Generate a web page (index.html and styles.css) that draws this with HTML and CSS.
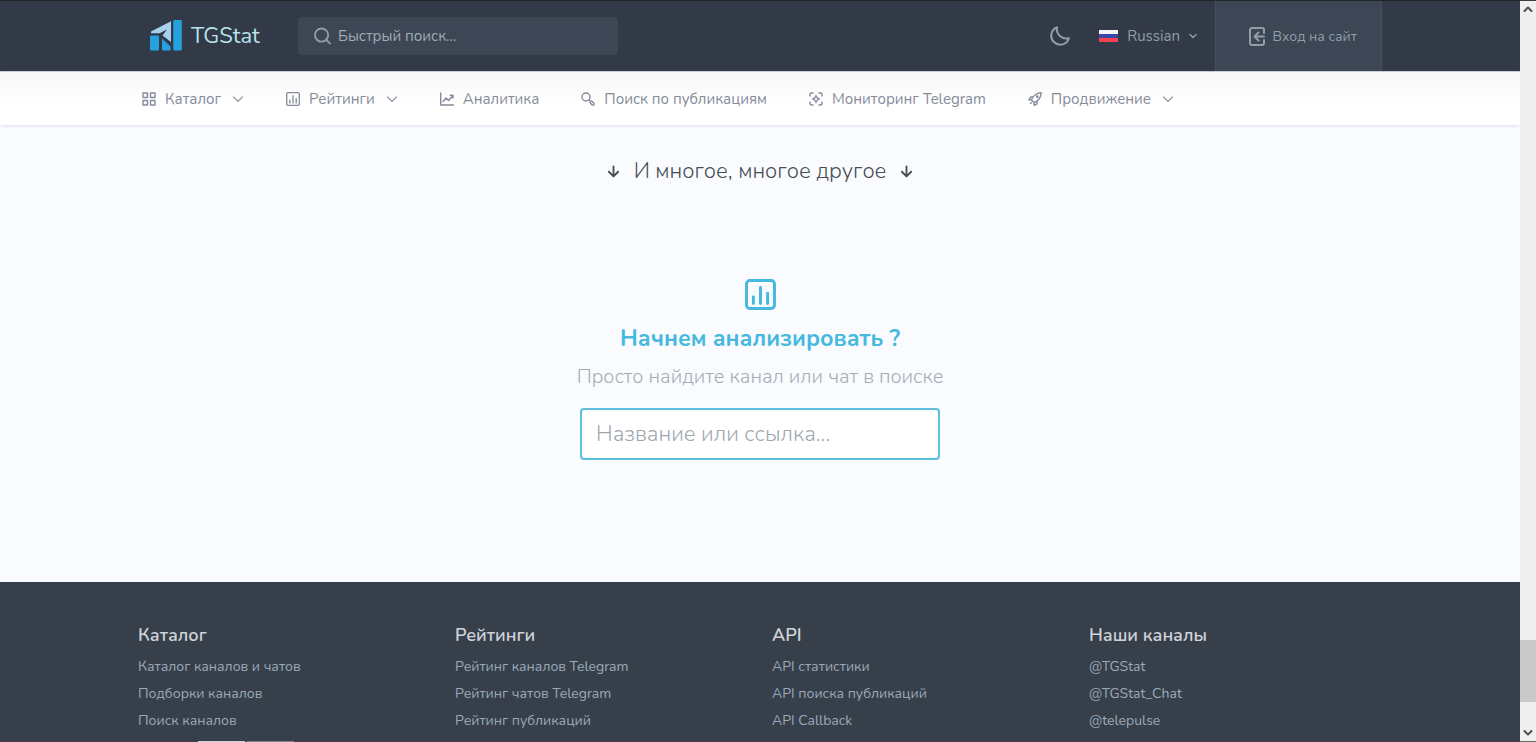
FILE: index.html
```html
<!DOCTYPE html>
<html lang="ru">
<head>
<meta charset="utf-8">
<meta name="viewport" content="width=device-width, initial-scale=1">
<title>TGStat</title>
<link rel="stylesheet" href="styles.css">
</head>
<body>
<svg class="sprite" aria-hidden="true">
  <symbol id="chart-box" viewBox="0 0 24 24"><rect x="1.2" y="1.2" width="21.6" height="21.6" rx="2.4"/><path d="M6.5 14v5M12 6.500v12.500M17.500 11v8"/></symbol>
  <symbol id="chevron" viewBox="0 0 12 12"><path d="M1.500 3.800 6 8.300l4.500-4.500"/></symbol>
  <symbol id="arrow-down" viewBox="0 0 12 14"><path d="M6 1.500v10.500M1 7.300l5 5 5-5"/></symbol>
</svg>
<div class="page">
  <header class="topbar">
    <div class="container topbar-row">
      <a class="brand" href="#">
        <svg class="brand-mark" viewBox="0 0 32 32" aria-hidden="true">
          <rect x="23.300" y="0" width="8.500" height="30.500" rx="1" fill="#27a0e0"/>
          <path d="M1 15.500h7a1 1 0 0 1 1 1v13a1 1 0 0 1-1 1H1a1 1 0 0 1-1-1v-13a1 1 0 0 1 1-1z" fill="#27a0e0"/>
          <path d="M12 18.500 20.500 26.500V29.500a1 1 0 0 1-1 1H13a1 1 0 0 1-1-1z" fill="#27a0e0"/>
          <path d="M1 11.500 21 1.200V22L12.500 15.500 17 9.500 9.500 13.300H1z" fill="#a6cff0"/>
        </svg>
        <span>TGStat</span>
      </a>
      <form class="quick-search" role="search">
        <svg viewBox="0 0 18 18" aria-hidden="true"><circle cx="8" cy="8" r="7"/><path d="m13 13 4 4"/></svg>
        <input type="search" aria-label="Быстрый поиск" placeholder="Быстрый поиск...">
      </form>
      <div class="tools">
        <button class="theme" type="button" aria-label="Тёмная тема">
          <svg viewBox="0 0 20 20" aria-hidden="true"><path d="M7 1.300A9 9 0 1 0 18.900 12.200 9.500 9.500 0 0 1 7 1.300z"/></svg>
        </button>
        <button class="language" type="button">
          <span class="flag"></span><span>Russian</span>
          <svg class="small-chevron" aria-hidden="true"><use href="#chevron"/></svg>
        </button>
        <a class="login" href="#">
          <svg viewBox="0 0 16 19" aria-hidden="true"><path d="M15 6V3a2 2 0 0 0-2-2H3a2 2 0 0 0-2 2v13a2 2 0 0 0 2 2h10a2 2 0 0 0 2-2v-3M15 9.500H6M9.500 5.500l-4 4 4 4"/></svg>
          <span>Вход на сайт</span>
        </a>
      </div>
    </div>
  </header>
  <nav class="menu">
    <div class="container menu-row">
      <a href="#"><svg class="icon" viewBox="0 0 14 14" aria-hidden="true"><path d="M1 1h4.500v4.500H1zM8.500 1H13v4.500H8.500zM1 8.500h4.500V13H1zM8.500 8.500H13V13H8.500z"/></svg><span>Каталог</span><svg class="chevron" aria-hidden="true"><use href="#chevron"/></svg></a>
      <a href="#"><svg class="icon chart" aria-hidden="true"><use href="#chart-box"/></svg><span>Рейтинги</span><svg class="chevron" aria-hidden="true"><use href="#chevron"/></svg></a>
      <a href="#"><svg class="icon" viewBox="0 0 14 14" aria-hidden="true"><path d="M.7 1v12H14M3 9.500l3-3.500 2.500 2.500L13 3.500M10.300 3.300H13V6"/></svg><span>Аналитика</span></a>
      <a href="#"><svg class="icon" viewBox="0 0 14 14" aria-hidden="true"><circle cx="5" cy="5" r="4"/><path d="m8 8 1.500 1.500M9.300 9.700c.6-.8 1.300-.8 1.900-.2l1.500 1.500c1.300 1.300-.4 3-1.700 1.700L9.500 11.200c-.5-.5-.6-1-.2-1.500z"/></svg><span>Поиск по публикациям</span></a>
      <a href="#"><svg class="icon" viewBox="0 0 14 14" aria-hidden="true"><path d="M1 4V2.500A1.500 1.500 0 0 1 2.500 1H4M10 1h1.500A1.500 1.500 0 0 1 13 2.500V4M13 10v1.500a1.500 1.500 0 0 1-1.500 1.500H10M4 13H2.500A1.500 1.500 0 0 1 1 11.500V10M7 4.500 9.500 7 7 9.500 4.500 7zM7 3.500v1M7 9.500v1M3.500 7h1M9.500 7h1"/></svg><span>Мониторинг Telegram</span></a>
      <a href="#"><svg class="icon" viewBox="0 0 14 14" aria-hidden="true"><path d="M3.500 8C4.500 4 8.500 1 13.200.8 13.200 5.500 10 9.500 6 10.500zM4.500 5H2.500L.8 7.800l3 .2M9 9.500v2.300L6.200 13.300 6 10.500M3.300 10.700 2.500 11.500"/><circle cx="9.300" cy="4.700" r=".7"/></svg><span>Продвижение</span><svg class="chevron" aria-hidden="true"><use href="#chevron"/></svg></a>
    </div>
  </nav>
  <main class="content">
    <h2 class="more"><svg aria-hidden="true"><use href="#arrow-down"/></svg><span>И многое, многое другое</span><svg aria-hidden="true"><use href="#arrow-down"/></svg></h2>
    <form class="start">
      <svg class="start-icon" aria-hidden="true"><use href="#chart-box"/></svg>
      <h3>Начнем анализировать ?</h3>
      <label for="channel">Просто найдите канал или чат в поиске</label>
      <input id="channel" type="text" placeholder="Название или ссылка...">
    </form>
  </main>
  <footer class="footer">
    <div class="container footer-grid">
      <section><h4>Каталог</h4><ul><li><a href="#">Каталог каналов и чатов</a></li><li><a href="#">Подборки каналов</a></li><li><a href="#">Поиск каналов</a></li></ul></section>
      <section><h4>Рейтинги</h4><ul><li><a href="#">Рейтинг каналов Telegram</a></li><li><a href="#">Рейтинг чатов Telegram</a></li><li><a href="#">Рейтинг публикаций</a></li></ul></section>
      <section><h4>API</h4><ul><li><a href="#">API статистики</a></li><li><a href="#">API поиска публикаций</a></li><li><a href="#">API Callback</a></li></ul></section>
      <section><h4>Наши каналы</h4><ul><li><a href="#">@TGStat</a></li><li><a href="#">@TGStat_Chat</a></li><li><a href="#">@telepulse</a></li></ul></section>
    </div>
    <div class="edge"><span></span><span></span></div>
  </footer>
</div>
<div class="scrollbar" aria-hidden="true">
  <svg viewBox="0 0 12 12"><path d="M2.500 8 6 4.500 9.500 8"/></svg>
  <div class="track"><div class="thumb"></div></div>
  <svg viewBox="0 0 12 12"><path d="M2.500 4 6 7.500 9.500 4"/></svg>
</div>
</body>
</html>
```
FILE: styles.css
```css
* { box-sizing: border-box; }
body {
  display: flex;
  min-height: 100vh;
  margin: 0;
  background: #fafbfe;
  color: #464c54;
  font-family: Nunito, Lato, "Open Sans", sans-serif;
  font-size: 15px;
}
a { color: inherit; text-decoration: none; }
button { padding: 0; border: 0; background: none; color: inherit; font: inherit; cursor: pointer; }
svg { flex: none; fill: none; stroke: currentColor; stroke-linecap: round; stroke-linejoin: round; }
h2, h3, h4, ul { margin: 0; padding: 0; }
.sprite { position: absolute; width: 0; height: 0; }
.page { display: flex; flex: 1; flex-direction: column; min-width: 0; }
.container { width: 100%; max-width: 1268px; margin: 0 auto; padding: 0 12px; }

.topbar { border-top: 1px solid #222426; background: #313a46; color: #8f9ea8; }
.topbar-row { display: flex; align-items: center; height: 70px; }
.brand { display: flex; align-items: center; gap: 9px; width: 160px; padding-left: 12px; color: #b6e3ec; font-size: 22px; line-height: 32px; }
.brand-mark { width: 32px; height: 32px; stroke: none; }
.quick-search { display: flex; align-items: center; gap: 7px; width: 320px; height: 38px; padding: 0 16px; border-radius: 4px; background: #3c4655; }
.quick-search svg { width: 17px; height: 18px; stroke-width: 2; }
.quick-search input { flex: 1; min-width: 0; padding: 0; border: 0; outline: 0; background: none; color: #a1abb4; font: inherit; }
.quick-search input::placeholder { color: #a1abb4; opacity: 1; }
.tools { display: flex; align-items: center; gap: 29px; height: 100%; margin-left: auto; }
.theme { display: flex; }
.theme svg { width: 20px; height: 20px; stroke-width: 2; }
.language { display: flex; align-items: center; gap: 9px; padding-right: 18px; margin-right: -29px; }
.flag { width: 19px; height: 12px; background: linear-gradient(#f4f4f4 33%, #3b47a5 33% 67%, #f4434f 67%); }
.small-chevron { width: 8px; height: 8px; stroke-width: 2; }
.login { display: flex; align-items: center; justify-content: flex-end; gap: 7px; width: 167px; height: 100%; padding-right: 24px; border: solid #454f5d; border-width: 0 1px; background: #3c4655; font-size: 14px; }
.login svg { width: 16px; height: 19px; stroke-width: 2; }

.menu { border-top: 1px solid #c9cbd0; background: linear-gradient(#f7f7f8, #fff 60%); color: #858b9a; box-shadow: 0 2px 3px -1px #dcdee8; }
.menu-row { display: flex; gap: 42px; align-items: center; height: 53px; padding: 0 12px 0 16px; }
.menu a { display: flex; align-items: center; gap: 9px; line-height: 24px; white-space: nowrap; }
.icon { width: 14px; height: 14px; stroke-width: 1.4; }
.icon.chart { stroke-width: 2.3; }
.chevron { width: 12px; height: 12px; margin-left: 2px; stroke-width: 1.1; }

.content { display: flex; flex-direction: column; align-items: center; padding: 29px 12px 122px; }
.more { display: flex; align-items: center; gap: 14px; font-size: 22px; font-weight: 300; line-height: 34px; }
.more svg { width: 13px; height: 13px; stroke-width: 2; }
.start { display: flex; flex-direction: column; align-items: center; width: 360px; max-width: 100%; padding-top: 91px; }
.start-icon { width: 31px; height: 31px; color: #47b8de; stroke-width: 2.3; }
.start h3 { padding-top: 12px; color: #47b8de; font-size: 23px; font-weight: 700; line-height: 34px; white-space: nowrap; }
.start label { padding: 6px 0 16px; color: #a3acb5; font-size: 20px; font-weight: 300; line-height: 30px; white-space: nowrap; }
.start input { width: 100%; height: 52px; padding: 0 14px; border: 2px solid #5cc0dd; border-radius: 4px; outline: 0; background: #fff; color: #464c54; font: inherit; font-size: 22px; font-weight: 300; }
.start input::placeholder { color: #9ea7b0; opacity: 1; }

.footer { display: flex; flex: 1; flex-direction: column; justify-content: space-between; background: #37404a; color: #9aa9ba; font-size: 14px; }
.footer-grid { display: grid; grid-template-columns: repeat(4, 1fr); gap: 24px; padding-top: 41px; }
.footer h4 { margin-bottom: 6px; color: #ced4da; font-size: 18px; font-weight: 600; line-height: 24px; }
.footer ul { list-style: none; }
.footer li { padding: 3px 0; line-height: 21px; }
.edge { display: flex; gap: 2px; height: 1px; padding-left: 198px; background: #453c44; }
.edge span { width: 47px; background: #d5d1d3; }
.edge span + span { background: #858084; }

.scrollbar { position: sticky; top: 0; display: flex; flex-direction: column; align-items: center; width: 16px; height: 100vh; border-top: 1px solid #3a3c3e; border-bottom: 1px solid #6b6669; background: #efefef; color: #505050; }
.scrollbar svg { width: 12px; height: 16px; stroke-width: 2; }
.track { display: flex; flex: 1; flex-direction: column; justify-content: flex-end; width: 100%; padding-bottom: 23px; }
.thumb { height: 9%; background: #cacaca; }
```
